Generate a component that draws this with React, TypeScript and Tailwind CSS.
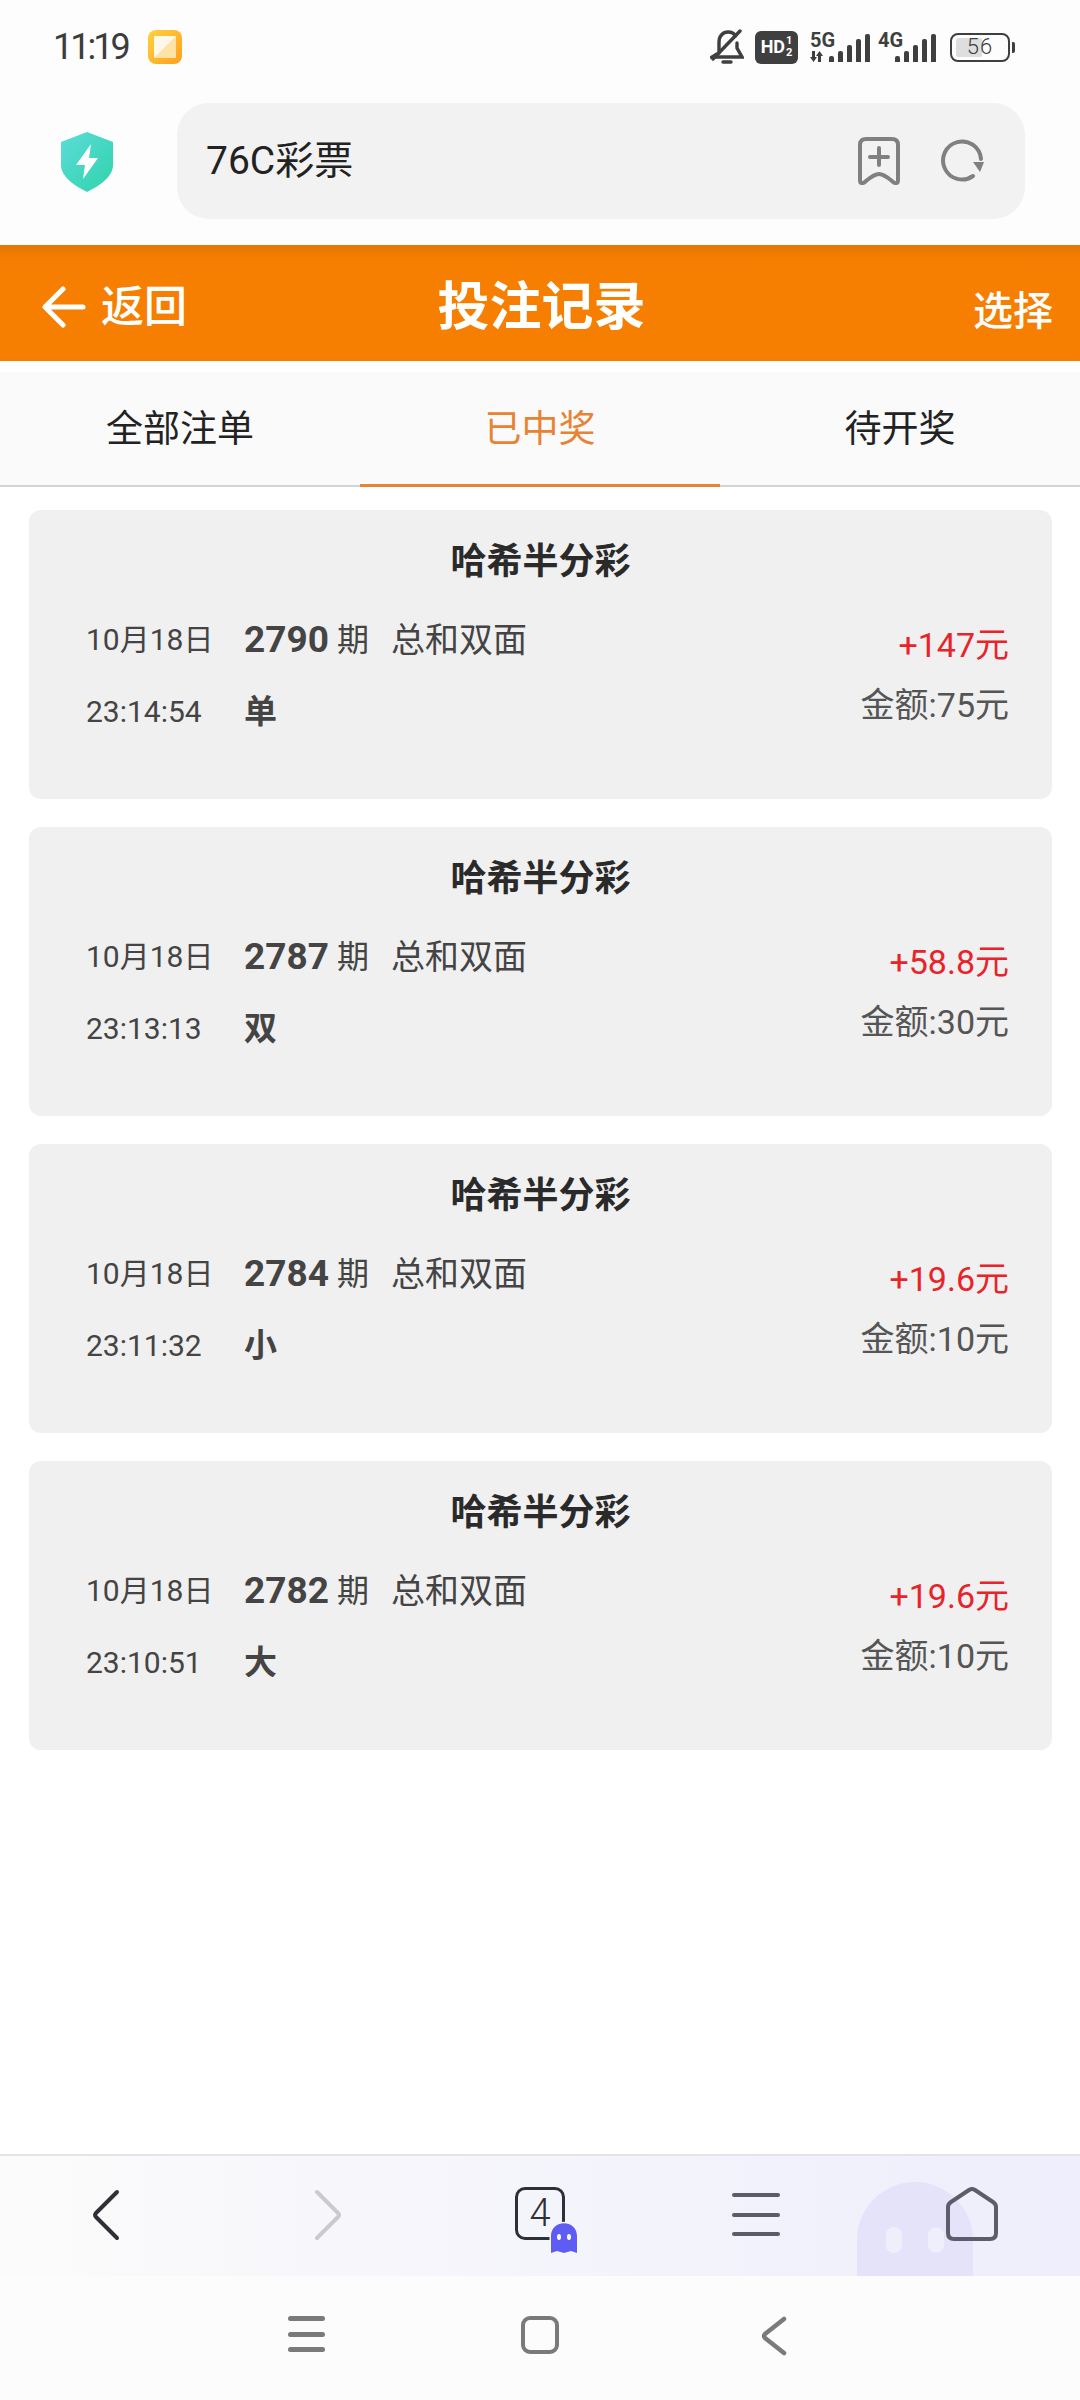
const cjk = { fontFamily: 'Roboto, "Noto Sans CJK SC", sans-serif' };

const records = [
  { time: "23:14:54", issue: "2790", pick: "单", win: "+147元", stake: "金额:75元" },
  { time: "23:13:13", issue: "2787", pick: "双", win: "+58.8元", stake: "金额:30元" },
  { time: "23:11:32", issue: "2784", pick: "小", win: "+19.6元", stake: "金额:10元" },
  { time: "23:10:51", issue: "2782", pick: "大", win: "+19.6元", stake: "金额:10元" },
];

function SignalBars() {
  const heights = [6, 11, 17, 23, 28];
  return (
    <div className="flex items-end gap-[4px]">
      {heights.map((h) => (
        <div key={h} className="w-[5px] rounded-t-[2px] bg-[#3f3f3f]" style={{ height: h }} />
      ))}
    </div>
  );
}

function Signal({ label, data }: { label: string; data?: boolean }) {
  return (
    <div className="relative flex h-[29px] justify-end" style={{ width: data ? 61 : 59 }}>
      <span className="absolute left-[1px] top-[-3px] text-[20px] font-bold leading-[20px] text-[#3f3f3f]">{label}</span>
      {data && (
        <svg className="absolute bottom-0 left-0" width="15" height="11" viewBox="0 0 15 11" fill="#3f3f3f">
          <path d="M3 0H6V6H8L4.500 11 1 6H3Z" />
          <path d="M9 11H12V5H14L10.500 0 7 5H9Z" />
        </svg>
      )}
      <SignalBars />
    </div>
  );
}

function StatusBar() {
  return (
    <div className="flex h-[103px] items-start justify-between pl-[53px] pr-[65px] pt-[29px]">
      <div className="flex items-center gap-[20px]">
        <span className="text-[36px] leading-[36px] tracking-[-3px] text-[#3c3c3c]">11:19</span>
        <div className="flex h-[34px] w-[34px] items-center justify-center rounded-[8px] bg-gradient-to-br from-[#ffd23f] to-[#ff9f1c]">
          <svg width="22" height="22" viewBox="0 0 22 22">
            <path d="M0 0H22V22H2Q0 22 0 20Z" fill="#ffe3a6" />
            <path d="M0 22 22 0H2Q0 0 0 2V20Z" fill="#fff8ea" />
          </svg>
        </div>
      </div>
      <div className="flex items-center gap-[11px]">
        <svg width="34" height="36" viewBox="0 0 34 36" fill="none" stroke="#3f3f3f" strokeWidth="3.4" strokeLinecap="round">
          <path d="M9 24V13C9 7 13 3 18 3C21 3 24 4 25.500 7" />
          <path d="M27 14V19L32 28H2L7 25" />
          <path d="M30 2 3 30" />
          <path d="M13 33H21" />
        </svg>
        <div className="flex h-[33px] w-[43px] items-center justify-center gap-[1px] rounded-[6px] bg-[#3f3f3f] text-white">
          <span className="text-[18px] font-bold leading-none">HD</span>
          <span className="flex flex-col text-[11px] font-bold leading-[12px]">
            <span>1</span>
            <span>2</span>
          </span>
        </div>
        <Signal label="5G" data />
        <div className="-ml-[4px]">
          <Signal label="4G" />
        </div>
        <div className="ml-[3px] flex items-center gap-[2px]">
          <div className="relative flex h-[29px] w-[60px] items-center justify-center rounded-[8px] border-[2.500px] border-[#3f3f3f]">
            <div className="absolute bottom-[3px] left-[4px] top-[3px] w-[26px] rounded-[2px] bg-[#dedede]" />
            <span className="relative text-[22px] font-light leading-none tracking-[1px] text-[#3f3f3f]">56</span>
          </div>
          <div className="h-[11px] w-[3px] rounded-r-[2px] bg-[#3f3f3f]" />
        </div>
      </div>
    </div>
  );
}

function AddressBar() {
  return (
    <div className="flex h-[142px] items-start pl-[61px] pr-[55px]">
      <svg className="mt-[29px]" width="52" height="60" viewBox="0 0 52 60">
        <defs>
          <linearGradient id="shieldFill" x1="0" y1="0" x2="1" y2="1">
            <stop offset="0" stopColor="#5cdcd8" />
            <stop offset="1" stopColor="#30d3ac" />
          </linearGradient>
        </defs>
        <path d="M26 0 52 10V33C52 45 38 54 26 60C14 54 0 45 0 33V10Z" fill="url(#shieldFill)" />
        <path d="M30 12 15 33H24L22 47 37 26H28Z" fill="#fff" />
      </svg>
      <div className="ml-[64px] flex h-[116px] flex-1 items-center justify-between rounded-[32px] bg-[#f2f2f2] pl-[29px] pr-[41px]">
        <span className="text-[39px] text-[#222]" style={cjk}>76C彩票</span>
        <div className="flex items-center gap-[40px]">
          <svg width="42" height="48" viewBox="0 0 42 48" fill="none" stroke="#808080" strokeWidth="4" strokeLinecap="round" strokeLinejoin="round">
            <path d="M2 8Q2 2 8 2H34Q40 2 40 8V43C40 47 37 47 34 44C28 39 25 37 21 37C17 37 14 39 8 44C5 47 2 47 2 43Z" />
            <path d="M21 11V28M12 20H30" />
          </svg>
          <svg width="44" height="44" viewBox="0 0 44 44" fill="none">
            <path d="M33 37A19 19 0 1 1 41 20" stroke="#808080" strokeWidth="4" strokeLinecap="round" />
            <path d="M33 23H44L40 33Z" fill="#808080" />
          </svg>
        </div>
      </div>
    </div>
  );
}

function PageHeader() {
  return (
    <header className="grid h-[116px] grid-cols-3 items-center bg-[#f67f02] bg-gradient-to-b from-[#e27606] to-[#f67f02] to-[14px] pt-[8px] text-white" style={cjk}>
      <div className="flex items-center gap-[15px] pl-[42px]">
        <svg width="44" height="42" viewBox="0 0 44 42" fill="none" stroke="#fff" strokeWidth="5" strokeLinecap="round" strokeLinejoin="round">
          <path d="M41 21H4M21 3 3 21 21 39" />
        </svg>
        <span className="text-[43px] font-medium leading-none">返回</span>
      </div>
      <h1 className="pl-[3px] pt-[2px] text-center text-[52px] font-bold leading-none">投注记录</h1>
      <span className="mt-[9px] pr-[27px] text-right text-[40px] font-medium leading-none">选择</span>
    </header>
  );
}

function Tabs() {
  return (
    <nav className="mt-[11px] grid h-[115px] grid-cols-3 border-b-2 border-[#d3d3d3] bg-[#fafafa] text-center text-[37px]" style={cjk}>
      <div className="flex items-center justify-center pt-[3px] text-[#222]">全部注单</div>
      <div className="-mb-[2px] flex items-center justify-center border-b-[3px] border-[#e88334] pt-[3px] text-[#e88334]">已中奖</div>
      <div className="flex items-center justify-center pt-[3px] text-[#222]">待开奖</div>
    </nav>
  );
}

function RecordCard({ time, issue, pick, win, stake }: (typeof records)[number]) {
  return (
    <article className="h-[289px] rounded-[12px] bg-[#f0f0f0] pt-[30px]" style={cjk}>
      <h2 className="text-center text-[36px] font-bold leading-[44px] text-[#2a2a2a]">哈希半分彩</h2>
      <div className="mt-[34px] flex justify-between pl-[57px] pr-[43px]">
        <div className="flex text-[#444]">
          <div className="flex w-[158px] flex-col gap-[28px] text-[30px] leading-[44px]">
            <span>10月18日</span>
            <span>{time}</span>
          </div>
          <div className="flex flex-col gap-[28px] leading-[44px]">
            <div className="flex items-center whitespace-nowrap">
              <span className="text-[37px] font-bold">{issue}</span>
              <span className="ml-[8px] text-[32px]">期</span>
              <span className="ml-[22px] text-[34px]">总和双面</span>
            </div>
            <span className="text-[33px] font-bold">{pick}</span>
          </div>
        </div>
        <div className="flex flex-col items-end pt-[5px] text-[34px] leading-[44px]">
          <span className="text-[#e8232a]">{win}</span>
          <span className="mt-[16px] text-[#555]">{stake}</span>
        </div>
      </div>
    </article>
  );
}

function BrowserToolbar() {
  return (
    <div className="relative grid h-[122px] grid-cols-5 justify-items-center overflow-hidden border-t-2 border-[#e3e3e8] bg-gradient-to-r from-[#fbfbfb] to-[#eeeefc] pt-[31px]">
      {/* mascot sits behind the home button */}
      <div className="absolute bottom-0 left-[857px] flex h-[94px] w-[116px] justify-center gap-[26px] rounded-t-[58px] bg-[#e4e3f9] pt-[45px]">
        <div className="h-[26px] w-[16px] rounded-full bg-[#efeefb]" />
        <div className="h-[26px] w-[16px] rounded-full bg-[#efeefb]" />
      </div>
      <svg className="-ml-[4px] mt-[2px]" width="28" height="52" viewBox="0 0 28 52" fill="none" stroke="#2f2f35" strokeWidth="4" strokeLinecap="round" strokeLinejoin="round">
        <path d="M25 3 4 24Q2 26 4 28L25 49" />
      </svg>
      <svg className="ml-[8px] mt-[2px]" width="28" height="52" viewBox="0 0 28 52" fill="none" stroke="#cbcbcb" strokeWidth="4" strokeLinecap="round" strokeLinejoin="round">
        <path d="M3 3 24 24Q26 26 24 28L3 49" />
      </svg>
      <div className="relative">
        <div className="flex h-[53px] w-[50px] items-center justify-center rounded-[10px] border-[3.500px] border-[#2f2f35] text-[38px] font-light text-[#2f2f35]">4</div>
        <svg className="absolute left-[34px] top-[34px]" width="30" height="34" viewBox="-2 -2 30 34">
          <path d="M0 30V13C0 -4 26 -4 26 13V30L20 28 13 30 6 28Z" fill="#5f5cf6" stroke="#f6f6fc" strokeWidth="3" paintOrder="stroke" />
          <ellipse cx="8" cy="14" rx="2" ry="3" fill="#fff" />
          <ellipse cx="18" cy="14" rx="2" ry="3" fill="#fff" />
        </svg>
      </div>
      <div className="mt-[6px] flex h-[43px] w-[48px] flex-col justify-between">
        <div className="h-[4px] rounded-full bg-[#5c5c66]" />
        <div className="h-[4px] rounded-full bg-[#5c5c66]" />
        <div className="h-[4px] rounded-full bg-[#5c5c66]" />
      </div>
      <svg className="relative" width="52" height="54" viewBox="0 0 52 54" fill="none" stroke="#5c5c6a" strokeWidth="4" strokeLinejoin="round">
        <path d="M2 20Q2 17 5 15L23 3Q26 1 29 3L47 15Q50 17 50 20V46Q50 52 44 52H8Q2 52 2 46Z" />
      </svg>
    </div>
  );
}

function SystemNav() {
  return (
    <div className="flex h-[124px] justify-center bg-[#fcfcfc] pt-[40px]">
      <div className="grid w-[702px] grid-cols-3 justify-items-center">
        <div className="flex h-[36px] w-[37px] flex-col justify-between">
          <div className="h-[5px] rounded-full bg-[#7a7a7a]" />
          <div className="h-[5px] rounded-full bg-[#7a7a7a]" />
          <div className="h-[5px] rounded-full bg-[#7a7a7a]" />
        </div>
        <div className="h-[38px] w-[38px] rounded-[9px] border-[4.500px] border-[#7a7a7a]" />
        <svg width="26" height="40" viewBox="0 0 26 40" fill="none" stroke="#7a7a7a" strokeWidth="4.500" strokeLinecap="round" strokeLinejoin="round">
          <path d="M23 3 4 18Q2 20 4 22L23 37" />
        </svg>
      </div>
    </div>
  );
}

export default function App() {
  return (
    <div className="flex h-[2400px] w-[1080px] flex-col bg-white font-['Roboto',sans-serif]">
      <div className="bg-[#fdfdfd]">
        <StatusBar />
        <AddressBar />
      </div>
      <PageHeader />
      <Tabs />
      <main className="flex flex-1 flex-col gap-[28px] pl-[29px] pr-[28px] pt-[23px]">
        {records.map((r) => (
          <RecordCard key={r.issue} {...r} />
        ))}
      </main>
      <BrowserToolbar />
      <SystemNav />
    </div>
  );
}
